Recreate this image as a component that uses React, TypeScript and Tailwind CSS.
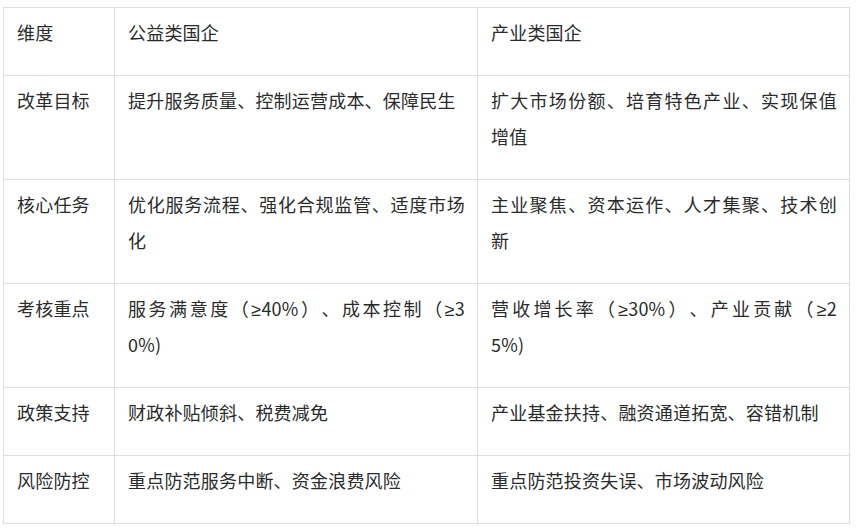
import type { ReactNode } from 'react';

type Cell = string | [string, string];

const rows: { label: string; a: Cell; b: Cell }[] = [
  {
    label: '改革目标',
    a: '提升服务质量、控制运营成本、保障民生',
    b: ['扩大市场份额、培育特色产业、实现保值', '增值'],
  },
  {
    label: '核心任务',
    a: ['优化服务流程、强化合规监管、适度市场', '化'],
    b: ['主业聚焦、资本运作、人才集聚、技术创', '新'],
  },
  {
    label: '考核重点',
    a: ['服务满意度（≥40%）、成本控制（≥3', '0%)'],
    b: ['营收增长率（≥30%）、产业贡献（≥2', '5%)'],
  },
  {
    label: '政策支持',
    a: '财政补贴倾斜、税费减免',
    b: '产业基金扶持、融资通道拓宽、容错机制',
  },
  {
    label: '风险防控',
    a: '重点防范服务中断、资金浪费风险',
    b: '重点防范投资失误、市场波动风险',
  },
];

const td =
  'border border-[#dddddd] align-top pl-[13px] pr-[12px] pt-[6px] pb-[25px] text-justify';

// the ≥ sign renders slanted in the CJK font, so give it a latin one
const withSigns = (text: string): ReactNode[] =>
  text.split('≥').flatMap((part, i) =>
    i === 0
      ? [part]
      : [
          <span
            key={i}
            className="font-['Liberation_Sans',sans-serif] leading-none"
          >
            ≥
          </span>,
          part,
        ]
  );

const CellText = ({ value }: { value: Cell }) => {
  if (typeof value === 'string') {
    return <>{withSigns(value)}</>;
  }
  return (
    <>
      <span className="block [text-align-last:justify]">
        {withSigns(value[0])}
      </span>
      <span className="block">{withSigns(value[1])}</span>
    </>
  );
};

export default function App() {
  return (
    <div className="min-h-screen bg-white pl-[3px] pt-[7px] font-['Microsoft_YaHei','Noto_Sans_CJK_SC',sans-serif] text-[18px] leading-[36px] tracking-[0.2px] text-[#2b2b2b] [text-spacing-trim:space-all]">
      <table className="w-[846px] table-fixed border-collapse">
        <colgroup>
          <col className="w-[111px]" />
          <col className="w-[363px]" />
          <col className="w-[372px]" />
        </colgroup>
        <tbody>
          <tr>
            <td className={td}>维度</td>
            <td className={td}>公益类国企</td>
            <td className={td}>产业类国企</td>
          </tr>
          {rows.map((r) => (
            <tr key={r.label}>
              <td className={td}>{r.label}</td>
              <td className={td}>
                <CellText value={r.a} />
              </td>
              <td className={td}>
                <CellText value={r.b} />
              </td>
            </tr>
          ))}
        </tbody>
      </table>
    </div>
  );
}
